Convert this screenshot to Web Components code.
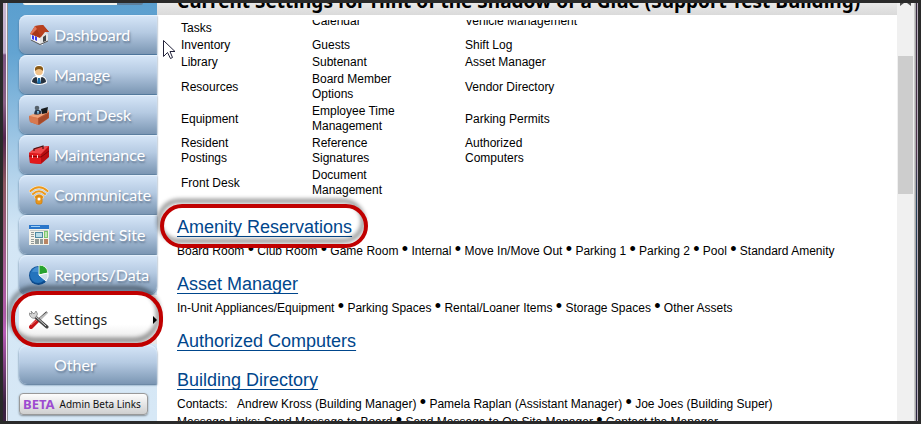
<!DOCTYPE html>
<html lang="en">
<head>
<meta charset="utf-8">
<title>Current Settings</title>
<style>
    body {
        margin: 0;
        font-family: "Liberation Sans", Arial, sans-serif;
        font-size: 12px;
        color: #000;
    }
    settings-section b { font-size: 18px; font-weight: normal; line-height: 0; }
    /* the tabs on both sides of the current one are rounded towards it */
    nav-tab:has(+ [current]) { --bottom-right: 8px; }
    nav-tab[current] + nav-tab { --top-right: 8px; }
</style>
</head>
<body>
<app-window>
    <side-nav slot="nav">
        <nav-tab label="Dashboard">
            <svg viewBox="0 0 20 20"><path d="M2 9 7 5l7 8v7l-4-1-8-4z" fill="#f4f4f8"/><path d="M11 12 15 6l4 3v7l-8 4z" fill="#e4e4e4"/><path d="M1 9 6 1l8-1 6 7-5 0-4 6z" fill="#a93618"/><path d="M6 1 14 0l6 7-4 0-4 5z" fill="#b8401f"/><path d="M1 9 6 1l2 3-5 5z" fill="#e0765a"/><path d="M3 10l2 1v4l-2-1zm3 1 2 1v4l-2-1z" fill="#3b3bea"/><path d="M14 12l3-2v6l-3 1z" fill="#44474a"/><path d="M2 15l9 4.500 8-3.500" fill="none" stroke="#555"/></svg>
        </nav-tab>
        <nav-tab label="Manage">
            <svg viewBox="0 0 20 20"><path d="M2 18q0-6 5-7-3-3-2-7 1-4 5-4t5 4q1 4-2 7 5 1 5 7-4 2-8 2t-8-2z" fill="#fff"/><path d="M3 17q0-4 4-5l3 2 3-2q4 1 4 5-3 2-7 2t-7-2z" fill="#26313e"/><circle cx="10" cy="6.500" r="3.800" fill="#f1c38b"/><path d="M6 6q-1-5 4-5t4 5q-2-2-4-2T6 6z" fill="#8a5a16"/><path d="M8 12l2 1 2-1v6H8z" fill="#e9f2f8"/><path d="M9 13h2l1 5-2 1-2-1z" fill="#176ba8"/></svg>
        </nav-tab>
        <nav-tab label="Front Desk">
            <svg viewBox="0 0 20 20"><path d="M5 11q0-6 3-7l4 2v7z" fill="#27364a"/><circle cx="8" cy="3" r="2.300" fill="#56616b"/><path d="M8 6l1 5 1-5z" fill="#8ecdf1"/><path d="M0 11 12 9l8-3v7l-10 7-9-3z" fill="#b4532f"/><path d="M0 11 9 13v7l-8-3z" fill="#d8794f"/><path d="M0 11 4 9l5 1 11-5v2L9 13z" fill="#efa37a"/><path d="M12 4l7-2-1 6-5 1z" fill="#171a1d"/><path d="M10 14l9-5v4l-9 6z" fill="#a5492a"/></svg>
        </nav-tab>
        <nav-tab label="Maintenance">
            <svg viewBox="0 0 20 20"><path d="M0 8 6 3l14-2v11l-8 7-11-1z" fill="#b80d10"/><path d="M0 8 6 3l14-2-8 8z" fill="#f0484a"/><path d="M0 8l12 1v10L1 18z" fill="#e2191c"/><path d="M0 11l12 1 8-6" fill="none" stroke="#7e0507"/><path d="M5 6V4l9-3v3" fill="none" stroke="#4c1414" stroke-width="1.200"/><path d="M3 10h1v3H3zm5 0h1v3H8z" fill="#ffd3d3"/></svg>
        </nav-tab>
        <nav-tab label="Communicate">
            <svg viewBox="0 0 20 20" fill="none" stroke-linecap="round"><path d="M1.500 6Q10-1.500 18.500 6M4 9q6-5.500 12 0M6.500 12q3.500-3.500 7 0" stroke="#fff1d8" stroke-width="3"/><path d="M1.500 6Q10-1.500 18.500 6M4 9q6-5.500 12 0M6.500 12q3.500-3.500 7 0" stroke="#ea981d" stroke-width="2"/><rect x="7" y="11" width="6" height="8" rx="2" fill="#ea981d" stroke="#d5830e"/><circle cx="10" cy="14" r="1.500" fill="#fff"/></svg>
        </nav-tab>
        <nav-tab label="Resident Site">
            <svg viewBox="0 0 20 20"><path d="M0 0h20v20H0z" fill="#f4f3ea"/><path d="M0 0h20v4H0z" fill="#2a76ca"/><path d="M2 1h9v1H2z" fill="#9fd0f7"/><path d="M1 5h18v1H1z" fill="#c5c9c9"/><path d="M6 7h8v6H6z" fill="#4d88a2"/><path d="M7 8h6v4H7z" fill="#b8dce8"/><path d="M15 6h4v7h-4z" fill="#7cc66e"/><path d="M16 7h2v5h-2z" fill="#c0e5b4"/><path d="M2 7.500h3M2 9.500h3M2 11.500h3M2 14.500h3M2 16.500h3M2 18.500h3" stroke="#929999"/><path d="M6 14h4v5H6zm5 0h3v5h-3z" fill="#909a98"/><path d="M15 14h4v5h-4z" fill="#b98462"/></svg>
        </nav-tab>
        <nav-tab label="Reports/Data">
            <svg viewBox="0 0 20 20"><circle cx="9.500" cy="10.500" r="9.500" fill="#0d4e92"/><circle cx="9" cy="10" r="8" fill="#2474bd"/><path d="M10 10V0q8 0 9 8z" fill="#28a32f" stroke="#e7f5e5"/><path d="M10 10l9-2q1 4-2 8z" fill="#cfe0e9" stroke="#fff"/><path d="M3 7q2-5 6-5v5z" fill="#569fdc" opacity=".6"/></svg>
        </nav-tab>
        <nav-tab label="Settings" current>
            <svg viewBox="0 0 20 20"><path d="M18 2 8 11" stroke="#444" stroke-width="2"/><path d="M18 2l1 1-8 8-2-2z" fill="#bbb"/><path d="M9 10l-7 7" stroke="#c51318" stroke-width="4" stroke-linecap="round"/><path d="M8 10l-6 5" stroke="#ef7a75"/><path d="M4 5l14 12" stroke="#444" stroke-width="3" stroke-linecap="round"/><path d="M5 5l12 11" stroke="#d8d8d8"/><path d="M2 1l3 3 2-3q3 3 0 6T1 6l-1-3 3 1z" fill="#d5d5d5" stroke="#777" stroke-width=".7"/></svg>
        </nav-tab>
        <nav-tab label="Other"></nav-tab>
    </side-nav>

    <span slot="title">Current Settings for Hint of the Shadow of a Glue (Support Test Building)</span>

    <link-table></link-table>
    <settings-section heading="Amenity Reservations">
        <div>Board Room <b>•</b> Club Room <b>•</b> Game Room <b>•</b> Internal <b>•</b> Move In/Move Out <b>•</b> Parking 1 <b>•</b> Parking 2 <b>•</b> Pool <b>•</b> Standard Amenity</div>
    </settings-section>
    <settings-section heading="Asset Manager">
        <div>In-Unit Appliances/Equipment <b>•</b> Parking Spaces <b>•</b> Rental/Loaner Items <b>•</b> Storage Spaces <b>•</b> Other Assets</div>
    </settings-section>
    <settings-section heading="Authorized Computers"></settings-section>
    <settings-section heading="Building Directory">
        <div>Contacts: &nbsp; Andrew Kross (Building Manager) <b>•</b> Pamela Raplan (Assistant Manager) <b>•</b> Joe Joes (Building Super)</div>
        <div>Message Links: Send Message to Board <b>•</b> Send Message to On Site Manager <b>•</b> Contact the Manager</div>
    </settings-section>

    <call-out slot="overlay" style="left: 160px; top: 204px; width: 208px; height: 44px"></call-out>
    <call-out slot="overlay" style="left: 11px; top: 291px; width: 152px; height: 56px"></call-out>
    <mouse-pointer slot="overlay" style="left: 163px; top: 39px"></mouse-pointer>
</app-window>

<script>
class AppWindow extends HTMLElement {
    constructor() {
        super();
        this.attachShadow({ mode: 'open' });
        this.shadowRoot.innerHTML = `
            <style>
                :host {
                    display: flex;
                    position: relative;
                    box-sizing: border-box;
                    height: 100vh;
                    border: 3px solid #2a2a2a;
                    overflow: hidden;
                    background: #fff;
                }
                .edge {
                    flex: none;
                    width: 5px;
                    background:
                        linear-gradient(90deg, transparent 3px, #f4eef4 3px, #f4eef4 4px, #8f9094 4px),
                        linear-gradient(#c9b8d2 0, #bda9c8 50px, #7c5584 52px, #8a5f86 100px, #54254f 135px, #8c5560 180px, #a05b8b 250px, #b65bb6 330px, #3a2140 400px);
                }
                .edge.right {
                    width: 4px;
                    background:
                        linear-gradient(90deg, #c8c8c8 1px, #a8a8a8 1px, #a8a8a8 2px, transparent 2px, transparent 3px, #b6adba 3px),
                        linear-gradient(#33283d 0, #513650 150px, #27445d 200px, #2b2540 100%);
                }
                main {
                    flex: 1;
                    min-width: 0;
                    display: flex;
                    flex-direction: column;
                }
                header {
                    flex: none;
                    height: 12px;
                    overflow: hidden;
                    background: linear-gradient(#e9e9e9, #dadada);
                    margin-bottom: 5px;
                    padding-left: 20px;
                }
                h1 {
                    margin: -16px 0 0;
                    font: bold 19px/28px "Noto Sans", sans-serif;
                    white-space: nowrap;
                }
                .scroller {
                    flex: 1;
                    min-height: 0;
                    overflow: hidden;
                }
                /* the list is scrolled part way through its first row */
                .page { margin-top: -16px; padding-left: 20px; }
                .bar {
                    flex: none;
                    width: 15px;
                    padding: 0 1px;
                    background: #f0f0f0;
                }
                .bar svg { display: block; width: 15px; height: 53px; }
                .thumb { height: 33%; background: #cdcdcd; }
            </style>
            <div class="edge"></div>
            <slot name="nav"></slot>
            <main>
                <header><h1><slot name="title"></slot></h1></header>
                <div class="scroller"><div class="page"><slot></slot></div></div>
            </main>
            <div class="bar">
                <svg viewBox="0 0 15 53"><path d="M2 0h4L2 3zM9 0h4v3z" fill="#505050"/></svg>
                <div class="thumb"></div>
            </div>
            <div class="edge right"></div>
            <slot name="overlay"></slot>
        `;
    }
}

class SideNav extends HTMLElement {
    constructor() {
        super();
        this.attachShadow({ mode: 'open' });
        this.shadowRoot.innerHTML = `
            <style>
                :host {
                    flex: none;
                    display: flex;
                    flex-direction: column;
                    box-sizing: border-box;
                    width: 149px;
                    padding-left: 11px;
                    background: linear-gradient(#5b9fcf 0, #63a4d2 50px, #a6cbe7 150px, #d3e6f5 230px, #d7e8f6 100%);
                }
                .search {
                    flex: none;
                    width: 120px;
                    height: 2px;
                    margin: 0 4px 10px;
                    background: linear-gradient(90deg, #f3f3ee 94px, #5d7f9c 94px);
                    border-radius: 0 0 4px 4px;
                }
                nav { display: flex; flex-direction: column; gap: 1px; }
                button {
                    flex: none;
                    display: flex;
                    align-items: center;
                    gap: 5px;
                    width: 129px;
                    height: 22px;
                    margin-top: 9px;
                    padding: 0 3px;
                    border: 1px solid #999;
                    border-radius: 4px;
                    background: linear-gradient(#fdfdfd, #cfcfcf);
                    box-shadow: 0 1px 2px rgba(0, 0, 0, .4);
                    font: 10px "Noto Sans", sans-serif;
                    color: #111;
                    white-space: nowrap;
                }
                b { font-size: 13px; color: #9d4bd0; }
            </style>
            <div class="search"></div>
            <nav><slot></slot></nav>
            <button type="button"><b>BETA</b><span>Admin Beta Links</span></button>
        `;
    }
}

class NavTab extends HTMLElement {
    constructor() {
        super();
        this.attachShadow({ mode: 'open' });
        this.shadowRoot.innerHTML = `
            <style>
                :host { display: block; }
                a {
                    display: flex;
                    align-items: center;
                    gap: 5px;
                    box-sizing: border-box;
                    height: 39px;
                    padding-left: 10px;
                    border-radius: 8px var(--top-right, 0) var(--bottom-right, 0) 8px;
                    background: linear-gradient(#d6e6f8 0, #b5cae2 45%, #7b96b3 100%);
                    box-shadow: 0 1px 2px #47688a, inset 0 1px 1px #e6f1fc;
                    font: 16px Lato, sans-serif;
                    color: #fff;
                    text-shadow: 1px 2px 2px rgba(60, 80, 105, .6);
                    text-decoration: none;
                    white-space: nowrap;
                }
                .icon { flex: none; width: 20px; height: 20px; }
                ::slotted(svg) { display: block; width: 20px; height: 20px; }
                .arrow { display: none; }
                :host([current]) a {
                    height: 49px;
                    background: linear-gradient(#fff 60%, #e4e4e4);
                    box-shadow: none;
                    font: 14px "Noto Sans", sans-serif;
                    color: #222;
                    text-shadow: none;
                }
                :host([current]) .arrow {
                    display: block;
                    margin-left: auto;
                    border: 4px solid transparent;
                    border-left-color: #000;
                    border-right: 0;
                }
            </style>
            <a href="#"><span class="icon"><slot></slot></span><span class="label"></span><span class="arrow"></span></a>
        `;
    }

    connectedCallback() {
        this.shadowRoot.querySelector('.label').textContent = this.getAttribute('label');
    }
}

class LinkTable extends HTMLElement {
    constructor() {
        super();
        this.attachShadow({ mode: 'open' });
        const rows = [
            ['<br>Tasks', 'Calendar', 'Vehicle Management'],
            ['Inventory', 'Guests', 'Shift Log'],
            ['Library', 'Subtenant', 'Asset Manager'],
            ['Resources', 'Board Member<br>Options', 'Vendor Directory'],
            ['Equipment', 'Employee Time<br>Management', 'Parking Permits'],
            ['Resident<br>Postings', 'Reference<br>Signatures', 'Authorized<br>Computers'],
            ['Front Desk', 'Document<br>Management', '']
        ];
        this.shadowRoot.innerHTML = `
            <style>
                :host { display: block; margin-bottom: 16px; }
                table { border-spacing: 2px; table-layout: fixed; width: 440px; }
                td { padding: 0 0 0 2px; line-height: 15px; vertical-align: middle; }
                .first { width: 129px; }
                .second { width: 151px; }
            </style>
            <table>
                <colgroup><col class="first"><col class="second"><col></colgroup>
                <tbody>${rows.map(row => `<tr>${row.map(cell => `<td>${cell}</td>`).join('')}</tr>`).join('')}</tbody>
            </table>
        `;
    }
}

class SettingsSection extends HTMLElement {
    constructor() {
        super();
        this.attachShadow({ mode: 'open' });
        this.shadowRoot.innerHTML = `
            <style>
                :host { display: block; padding-bottom: 13px; }
                h2 { margin: 0 0 4px; font: 18px/22px "Liberation Sans", Arial, sans-serif; }
                a { color: #00468c; text-decoration: underline; text-underline-offset: 3px; text-decoration-thickness: 1px; text-decoration-skip-ink: none; }
                ::slotted(div) { line-height: 18px; white-space: nowrap; }
            </style>
            <h2><a href="#"></a></h2>
            <slot></slot>
        `;
    }

    connectedCallback() {
        this.shadowRoot.querySelector('a').textContent = this.getAttribute('heading');
    }
}

// Red ring drawn over the page, positioned by its user
class CallOut extends HTMLElement {
    constructor() {
        super();
        this.attachShadow({ mode: 'open' });
        this.shadowRoot.innerHTML = `
            <style>
                :host {
                    position: absolute;
                    box-sizing: border-box;
                    margin: -3px 0 0 -3px;
                    border: 4px solid #c00000;
                    border-radius: 26px;
                    filter: drop-shadow(-3px -5px 2px rgba(0, 0, 0, .45));
                    pointer-events: none;
                }
            </style>
        `;
    }
}

class MousePointer extends HTMLElement {
    constructor() {
        super();
        this.attachShadow({ mode: 'open' });
        this.shadowRoot.innerHTML = `
            <style>
                :host { position: absolute; margin: -3px 0 0 -3px; }
                svg { display: block; width: 13px; height: 21px; }
            </style>
            <svg viewBox="0 0 13 21"><path d="M.5 1.500v16l4-4 3 6 2-1-2.500-6h5z" fill="#fff" stroke="#22223a"/></svg>
        `;
    }
}

customElements.define('app-window', AppWindow);
customElements.define('side-nav', SideNav);
customElements.define('nav-tab', NavTab);
customElements.define('link-table', LinkTable);
customElements.define('settings-section', SettingsSection);
customElements.define('call-out', CallOut);
customElements.define('mouse-pointer', MousePointer);
</script>
</body>
</html>
